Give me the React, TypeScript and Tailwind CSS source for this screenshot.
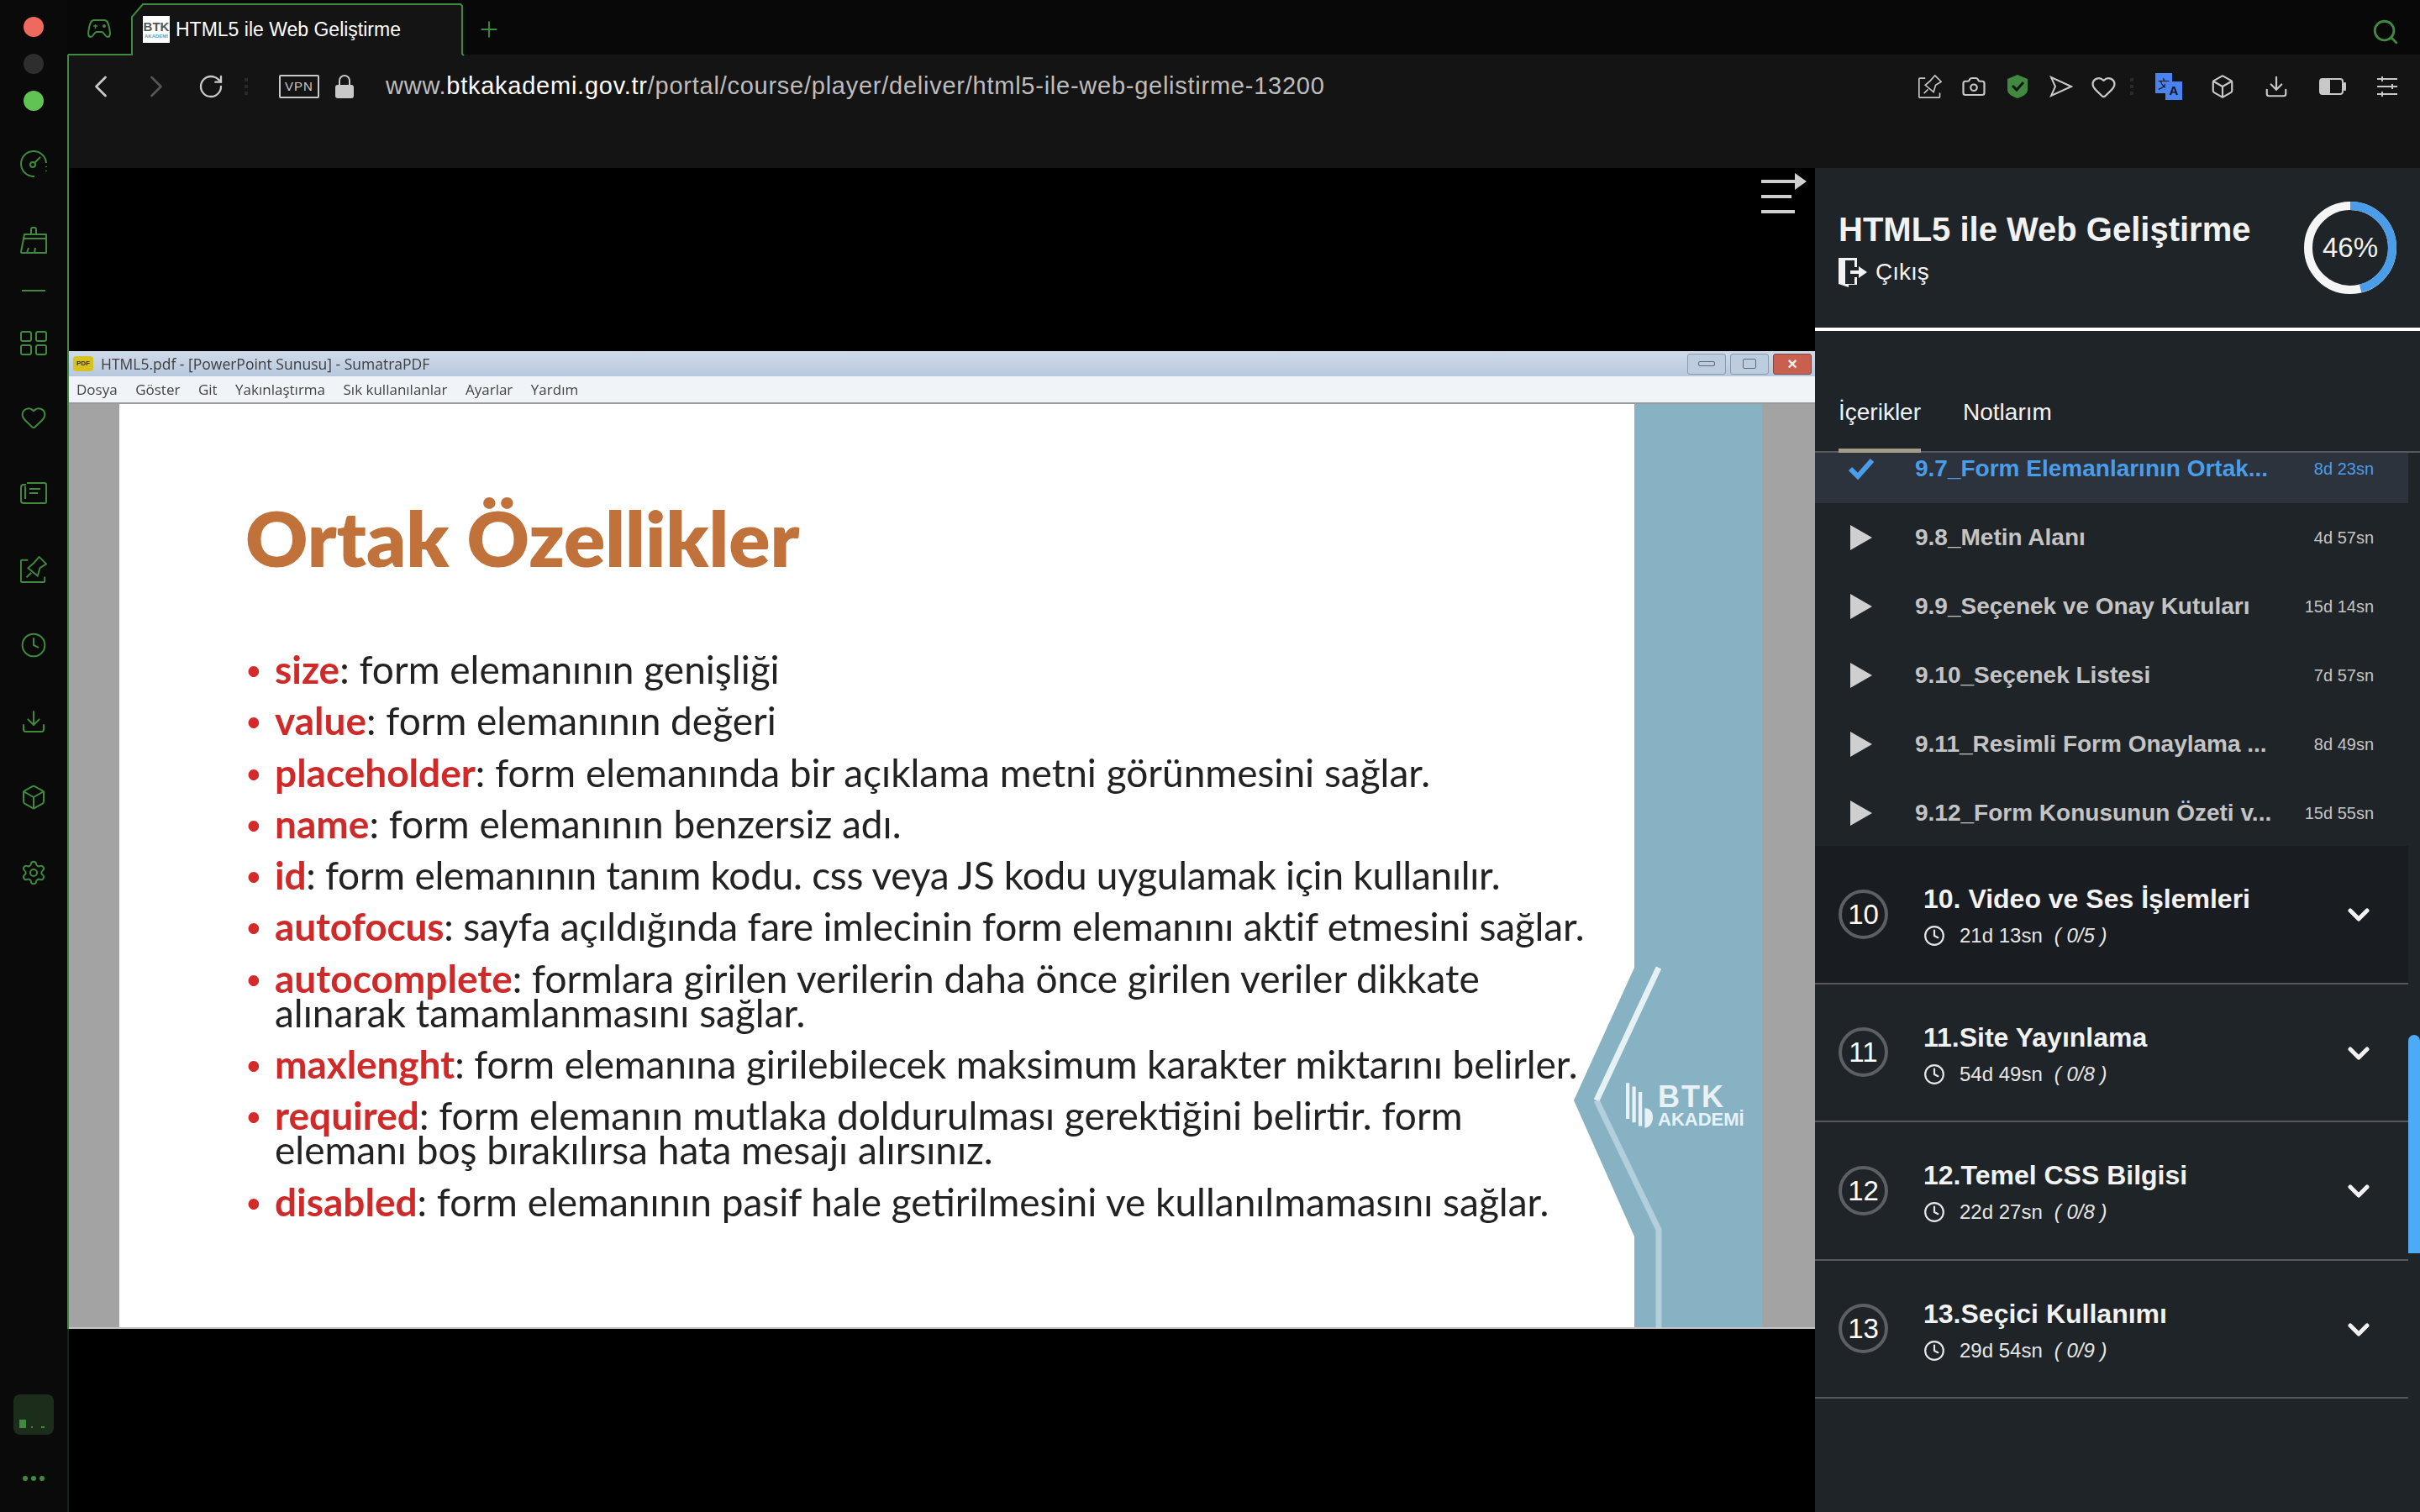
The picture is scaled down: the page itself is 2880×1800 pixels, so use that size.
import {
  Box,
  Camera,
  ChevronDown,
  ChevronLeft,
  ChevronRight,
  Clock,
  Download,
  Heart,
  Plus,
  RotateCw,
  Search,
  Settings,
} from 'lucide-react';

const green = '#3f8a3f';

function PinIcon({ color, size = 32 }: { color: string; size?: number }) {
  return (
    <svg width={size} height={size} viewBox="0 0 34 34" fill="none" stroke={color} strokeWidth="2">
      <path d="M10 5H2a1 1 0 00-1 1v26a1 1 0 001 1h28a1 1 0 001-1v-6" />
      <path d="M24 1l9 9-8 5-3 10-12-10 7-6z" />
      <path d="M8 27l6-6" />
    </svg>
  );
}

function GaugeIcon() {
  return (
    <svg width="32" height="32" viewBox="0 0 32 32" fill="none" stroke={green} strokeWidth="2">
      <path d="M17 31A15 15 0 1131 15" />
      <path d="M31 19v1M31 24v1" />
      <circle cx="15" cy="17" r="3" />
      <path d="M17 15l7-7" />
    </svg>
  );
}

function BroomIcon() {
  return (
    <svg width="32" height="32" viewBox="0 0 32 32" fill="none" stroke={green} strokeWidth="2">
      <path d="M13 9V3a2 2 0 012-2h2a2 2 0 012 2v6" />
      <path d="M5 9h26v22H2a1 1 0 01-1-1z" strokeLinejoin="round" />
      <path d="M4 14h27M8 31l2-6M17 31l1-6" />
    </svg>
  );
}

function CardsIcon() {
  return (
    <svg width="32" height="32" viewBox="0 0 32 32" fill="none" stroke={green} strokeWidth="2">
      <path d="M8 4h21a2 2 0 012 2v20a2 2 0 01-2 2H4a3 3 0 01-3-3V9a3 3 0 013-3h3" />
      <path d="M6 8v15M11 11h13M11 16h10" />
    </svg>
  );
}

function GridIcon() {
  return (
    <svg width="32" height="32" viewBox="0 0 32 32" fill="none" stroke={green} strokeWidth="2">
      <rect x="1" y="3" width="12" height="11" rx="2" />
      <rect x="19" y="3" width="12" height="11" rx="2" />
      <rect x="1" y="19" width="12" height="11" rx="2" />
      <rect x="19" y="19" width="12" height="11" rx="2" />
    </svg>
  );
}

function RailIcons() {
  const props = { size: 32, color: green, strokeWidth: 1.5 };
  return (
    <>
      <div className="mt-[47px] flex flex-col items-center gap-[59px]">
        <GaugeIcon />
        <BroomIcon />
      </div>
      <div className="mt-[43px] h-[2px] w-[28px] bg-[#3f8a3f]" />
      <div className="mt-[45px]">
        <GridIcon />
      </div>
      <div className="mt-[57px] flex flex-col items-center gap-[58.400px]">
        <Heart {...props} />
        <CardsIcon />
        <PinIcon color={green} />
        <Clock {...props} />
        <Download {...props} />
        <Box {...props} />
        <Settings {...props} />
      </div>
    </>
  );
}

function Rail() {
  return (
    <div className="flex h-full w-[80px] shrink-0 flex-col items-center bg-[#0a0a0a]">
      <div className="mt-[20px] flex flex-col gap-[20px]">
        <div className="h-[24px] w-[24px] rounded-full bg-[#ee6a5f]" />
        <div className="h-[24px] w-[24px] rounded-full bg-[#2e2e2e]" />
        <div className="h-[24px] w-[24px] rounded-full bg-[#5fc454]" />
      </div>
      <RailIcons />
      <div className="mt-auto flex h-[48px] w-[48px] items-end gap-[4px] rounded-[8px] bg-[#1c2e1b] px-[7px] pb-[8px]">
        <div className="h-[10px] w-[8px] bg-[#3f8a3f]" />
        <div className="ml-[2px] h-[2px] w-[2px] bg-[#3f8a3f]" />
        <div className="ml-[6px] h-[2px] w-[4px] bg-[#3f8a3f]" />
      </div>
      <div className="mb-[37px] mt-[49px] flex gap-[4px]">
        <div className="h-[6px] w-[6px] rounded-full bg-[#3f8a3f]" />
        <div className="h-[6px] w-[6px] rounded-full bg-[#3f8a3f]" />
        <div className="h-[6px] w-[6px] rounded-full bg-[#3f8a3f]" />
      </div>
    </div>
  );
}

function TopStrip() {
  return (
    <div className="relative flex h-[65px] shrink-0 items-center bg-[#080808]">
      <svg
        className="absolute left-0 top-0"
        width="2800"
        height="67"
        viewBox="0 0 2800 67"
        fill="#141414"
      >
        <defs>
          <linearGradient id="fade" x1="0" x2="1" y1="0" y2="0">
            <stop offset="0" stopColor={green} />
            <stop offset="0.35" stopColor={green} />
            <stop offset="0.8" stopColor="#141414" />
          </linearGradient>
        </defs>
        <path d="M77 66V20L90 5H468l2 2V64l2 2" stroke={green} strokeWidth="2" />
        <path d="M1 65H77" stroke={green} strokeWidth="2" />
        <path d="M471 65H2800" stroke="url(#fade)" strokeWidth="2" />
      </svg>
      <svg className="absolute left-[24px] top-[21px]" width="28" height="26" viewBox="0 0 28 26" fill="none" stroke={green} strokeWidth="2">
        <path d="M8 3h12c4 0 5 4 6 9s2 11-2 11c-3 0-4-6-7-6h-6c-3 0-4 6-7 6-4 0-3-6-2-11s2-9 6-9z" />
        <path d="M7 10h5M9.500 8v5" strokeWidth="1.500" />
        <circle cx="20" cy="10" r="1" />
      </svg>
      <div className="absolute left-[90px] top-[18px] flex items-center gap-[7px]">
        <div className="flex h-[32px] w-[32px] flex-col items-center justify-center bg-white font-['Liberation_Sans',sans-serif] leading-none">
          <span className="text-[15px] font-bold leading-[15px] text-[#555]">BTK</span>
          <span className="text-[6px] font-bold leading-[8px] text-[#5ba6bd]">AKADEMİ</span>
        </div>
        <span className="whitespace-nowrap font-['Liberation_Sans',sans-serif] text-[23px] text-white">
          HTML5 ile Web Geliştirme
        </span>
      </div>
      <Plus className="absolute left-[487px] top-[20px]" size={30} color={green} strokeWidth={1.5} />
      <Search className="absolute right-[24px] top-[21px]" size={34} color={green} strokeWidth={2} />
    </div>
  );
}

function ToolIcon({ children, w }: { children: React.ReactNode; w: string }) {
  return <div className={`flex h-[40px] items-center justify-center ${w}`}>{children}</div>;
}

function Toolbar() {
  const c = '#c8c8c8';
  const sw = 1.75;
  return (
    <div className="flex h-[135px] shrink-0 border-l-2 border-[#3f8a3f] bg-[#141414]">
      <div className="flex h-[76px] w-full items-center pl-[20px] pr-[5px]">
        <ChevronLeft size={44} color={c} strokeWidth={1.5} className="-ml-[4px]" />
        <ChevronRight size={44} color="#555" strokeWidth={1.5} className="ml-[22px]" />
        <RotateCw size={32} color={c} strokeWidth={1.75} className="ml-[27px]" />
        <div className="ml-[24px] flex flex-col gap-[4px]">
          <div className="h-[4px] w-[4px] bg-[#2a2a2a]" />
          <div className="h-[4px] w-[4px] bg-[#2a2a2a]" />
          <div className="h-[4px] w-[4px] bg-[#2a2a2a]" />
        </div>
        <div className="ml-[37px] flex h-[28px] w-[48px] items-center justify-center rounded-[2px] border-2 border-[#c8c8c8] font-['Liberation_Sans',sans-serif] text-[15px] tracking-[1px] text-[#c8c8c8]">
          VPN
        </div>
        <svg className="ml-[19px]" width="22" height="28" viewBox="0 0 22 28" fill={c}>
          <path d="M5 12V7a6 6 0 0112 0v5" fill="none" stroke={c} strokeWidth="2" />
          <rect x="0" y="12" width="22" height="16" rx="3" />
        </svg>
        <span className="ml-[38px] whitespace-nowrap font-['Liberation_Sans',sans-serif] text-[29px] tracking-[0.75px] text-[#bdbdbd]">
          www.<span className="text-white">btkakademi.gov.tr</span>/portal/course/player/deliver/html5-ile-web-gelistirme-13200
        </span>
        <div className="ml-auto flex items-center">
          <ToolIcon w="w-[52px]"><PinIcon color={c} size={28} /></ToolIcon>
          <ToolIcon w="w-[52px]"><Camera size={30} color={c} strokeWidth={sw} /></ToolIcon>
          <ToolIcon w="w-[52px]">
            <svg width="26" height="30" viewBox="0 0 26 30">
              <path d="M13 1l12 5v13c0 5-6 8-12 10C7 27 1 24 1 19V6z" fill="#3f8a3f" />
              <path d="M7 14l5 5 8-9" fill="none" stroke="#141414" strokeWidth="3" />
            </svg>
          </ToolIcon>
          <ToolIcon w="w-[52px]">
            <svg width="28" height="26" viewBox="0 0 28 26" fill="none" stroke={c} strokeWidth="2">
              <path d="M2 2l24 11L2 24l5-11z" />
            </svg>
          </ToolIcon>
          <ToolIcon w="w-[48px]"><Heart size={31} color={c} strokeWidth={sw} /></ToolIcon>
          <div className="ml-[8px] mr-[6px] flex flex-col gap-[4px]">
            <div className="h-[4px] w-[4px] bg-[#2a2a2a]" />
            <div className="h-[4px] w-[4px] bg-[#2a2a2a]" />
            <div className="h-[4px] w-[4px] bg-[#2a2a2a]" />
          </div>
          <ToolIcon w="w-[72px]">
            <div className="relative h-[32px] w-[32px]">
              <div className="absolute left-0 top-0 flex h-[24px] w-[20px] items-center justify-center bg-[#4a82f0] font-['Noto_Sans_CJK_SC',sans-serif] text-[14px] text-[#141414]">
                文
              </div>
              <div className="absolute bottom-0 right-0 flex h-[22px] w-[20px] items-center justify-center bg-[#4a82f0] font-['Liberation_Sans',sans-serif] text-[15px] font-bold text-[#141414]">
                A
              </div>
            </div>
          </ToolIcon>
          <ToolIcon w="w-[56px]"><Box size={30} color={c} strokeWidth={sw} /></ToolIcon>
          <ToolIcon w="w-[72px]"><Download size={30} color={c} strokeWidth={sw} /></ToolIcon>
          <ToolIcon w="w-[62px]">
            <svg width="32" height="20" viewBox="0 0 32 20">
              <rect x="1" y="1" width="27" height="18" rx="3" fill="none" stroke={c} strokeWidth="2" />
              <rect x="1" y="1" width="12" height="18" rx="2" fill={c} />
              <rect x="29" y="5" width="3" height="10" rx="1" fill={c} />
            </svg>
          </ToolIcon>
          <ToolIcon w="w-[68px]">
            <svg width="26" height="26" viewBox="0 0 26 26" stroke={c} strokeWidth="2">
              <path d="M1 4h24M1 13h24M1 22h24M7 1v6M19 10v6M7 19v6" />
            </svg>
          </ToolIcon>
        </div>
      </div>
    </div>
  );
}

const menuItems = ['Dosya', 'Göster', 'Git', 'Yakınlaştırma', 'Sık kullanılanlar', 'Ayarlar', 'Yardım'];

function WindowButton({ children, red }: { children: React.ReactNode; red?: boolean }) {
  return (
    <div
      className={`flex h-[25px] w-[46px] items-center justify-center rounded-[3px] border ${
        red ? 'border-[#7d4a44] bg-[#c9604f]' : 'border-[#8c99a8] bg-[#bccde0]'
      }`}
    >
      {children}
    </div>
  );
}

const bullets: { key: string; text: string; more?: string; tight?: string }[] = [
  { key: 'size', text: ': form elemanının genişliği' },
  { key: 'value', text: ': form elemanının değeri' },
  { key: 'placeholder', text: ': form elemanında bir açıklama metni görünmesini sağlar.' },
  { key: 'name', text: ': form elemanının benzersiz adı.' },
  { key: 'id', text: ': form elemanının tanım kodu. css veya JS kodu uygulamak için kullanılır.', tight: 'tracking-[-0.27px]' },
  { key: 'autofocus', text: ': sayfa açıldığında fare imlecinin form elemanını aktif etmesini sağlar.', tight: 'tracking-[-0.16px]' },
  { key: 'autocomplete', text: ': formlara girilen verilerin daha önce girilen veriler dikkate', more: 'alınarak tamamlanmasını sağlar.' },
  { key: 'maxlenght', text: ': form elemanına girilebilecek maksimum karakter miktarını belirler.', tight: 'tracking-[-0.08px]' },
  { key: 'required', text: ': form elemanın mutlaka doldurulması gerektiğini belirtir. form', more: 'elemanı boş bırakılırsa hata mesajı alırsınız.' },
  { key: 'disabled', text: ': form elemanının pasif hale getirilmesini ve kullanılmamasını sağlar.' },
];

function Slide() {
  return (
    <div className="relative flex flex-1 border-b-2 border-[#c4c4c4] bg-[#a3a3a3]">
      <div className="ml-[60px] w-[1803px] bg-white pl-[150px] pt-[101px] font-['Lato',sans-serif] blur-[0.5px]">
        <h1 className="text-[91.500px] font-extrabold leading-[116px] text-[#c1713a]">Ortak Özellikler</h1>
        <ul className="mt-[78px] flex flex-col gap-[20.300px]">
          {bullets.map((b) => (
            <li key={b.key} className={`flex text-[46px] leading-[41px] text-[#222] ${b.tight ?? ''}`}>
              <span className="w-[35px] shrink-0 text-[34px] text-[#d42a2a]">•</span>
              <span className="whitespace-nowrap">
                <span className="font-bold text-[#cf2a2a]">{b.key}</span>
                {b.text}
                {b.more && <br />}
                {b.more}
              </span>
            </li>
          ))}
        </ul>
      </div>
      <div className="w-[152px] bg-[#87b2c4]" />
      {/* teal side band of the slide, with the notch cut into the white page */}
      <svg className="absolute left-[1770px] top-0" width="230" height="1100" viewBox="0 0 230 1100" fill="none">
        <defs>
          <linearGradient id="stripe" x1="0" x2="0" y1="0" y2="1">
            <stop offset="0" stopColor="#8db6c7" />
            <stop offset="0.5" stopColor="#a9cbd9" />
            <stop offset="1" stopColor="#f0f7fa" />
          </linearGradient>
        </defs>
        <path d="M93 671L21 829L93 991z" fill="#87b2c4" />
        <path d="M122 30V671" stroke="url(#stripe)" strokeWidth="7" />
        <path d="M122 671L48 829" stroke="#e6f1f5" strokeWidth="7" />
        <path d="M48 829L122 983V1100" stroke="#c4dbe5" strokeWidth="7" opacity="0.7" />
      </svg>
      <div className="absolute left-[1853px] top-[806px] flex items-center gap-[6px] font-['Liberation_Sans',sans-serif] text-[#e8f2f6]">
        <svg width="32" height="58" viewBox="0 0 30 54" fill="#e8f2f6">
          <path d="M0 2h4v40H0zM7 6h4v40H7zM14 12h4v38h-4zM21 30c6 0 9 4 9 10s-3 12-9 12z" />
        </svg>
        <div className="flex flex-col leading-none">
          <span className="text-[36px] font-bold leading-[33px] tracking-[2px]">BTK</span>
          <span className="text-[22px] font-bold leading-[21px]">AKADEMİ</span>
        </div>
      </div>
    </div>
  );
}

function SlideWindow() {
  return (
    <div className="flex h-[1164px] shrink-0 flex-col border-l-2 border-[#3f8a3f]">
      <div className="flex h-[30px] shrink-0 items-center bg-gradient-to-b from-[#cfdbe9] to-[#b7c8de] pl-[5px] pr-[4px]">
        <div className="flex h-[18px] w-[24px] items-center justify-center rounded-[4px] bg-[#d8c21e] font-['Liberation_Sans',sans-serif] text-[8px] font-bold text-[#333]">
          PDF
        </div>
        <span className="ml-[9px] font-['Open_Sans',sans-serif] text-[17.500px] text-[#3d3d3d] blur-[0.3px]">
          HTML5.pdf - [PowerPoint Sunusu] - SumatraPDF
        </span>
        <div className="ml-auto flex gap-[5px]">
          <WindowButton><div className="h-[6px] w-[20px] rounded-[2px] border border-[#667]" /></WindowButton>
          <WindowButton><div className="h-[12px] w-[16px] rounded-[2px] border border-[#667]" /></WindowButton>
          <WindowButton red><span className="font-['Liberation_Sans',sans-serif] text-[20px] font-bold leading-none text-[#eee]">×</span></WindowButton>
        </div>
      </div>
      <div className="flex h-[33px] shrink-0 items-center gap-[21.500px] border-b-2 border-[#9a9a9a] bg-[#f0f3f8] pl-[9px] font-['Open_Sans',sans-serif] text-[17px] text-[#444] blur-[0.3px]">
        {menuItems.map((m) => (
          <span key={m}>{m}</span>
        ))}
      </div>
      <Slide />
    </div>
  );
}

function VideoArea() {
  return (
    <div className="flex min-w-0 flex-1 flex-col bg-black">
      <div className="h-[218px] shrink-0 border-l-2 border-[#3f8a3f]">
        <svg className="ml-[2014px] mt-[6px]" width="54" height="48" viewBox="0 0 54 48" fill="#cfcfcf">
          <path d="M0 8h40V0l14 10-14 10v-8H0zM0 26h36v4H0zM0 44h40v4H0z" />
        </svg>
      </div>
      <SlideWindow />
      <div className="flex-1 border-l-2 border-[#12241a]" />
    </div>
  );
}

const lessons = [
  { title: '9.7_Form Elemanlarının Ortak...', time: '8d 23sn', done: true },
  { title: '9.8_Metin Alanı', time: '4d 57sn' },
  { title: '9.9_Seçenek ve Onay Kutuları', time: '15d 14sn' },
  { title: '9.10_Seçenek Listesi', time: '7d 57sn' },
  { title: '9.11_Resimli Form Onaylama ...', time: '8d 49sn' },
  { title: '9.12_Form Konusunun Özeti v...', time: '15d 55sn' },
];

const chapters = [
  { n: 10, title: '10. Video ve Ses İşlemleri', time: '21d 13sn', count: '( 0/5 )', dark: true },
  { n: 11, title: '11.Site Yayınlama', time: '54d 49sn', count: '( 0/8 )' },
  { n: 12, title: '12.Temel CSS Bilgisi', time: '22d 27sn', count: '( 0/8 )' },
  { n: 13, title: '13.Seçici Kullanımı', time: '29d 54sn', count: '( 0/9 )' },
];

function LessonRow({ title, time, done }: { title: string; time: string; done?: boolean }) {
  return (
    <div className={`flex h-[82px] items-center pl-[40px] pr-[41px] ${done ? 'bg-[#2c333c]' : ''}`}>
      <div className="flex w-[79px] shrink-0">
        {done ? (
          <svg width="30" height="26" viewBox="0 0 30 26" fill="none" stroke="#4a9de8" strokeWidth="6">
            <path d="M2 13l9 9L28 3" />
          </svg>
        ) : (
          <svg width="30" height="30" viewBox="0 0 30 30" fill="#cfcfcf">
            <path d="M2 0l26 15L2 30z" />
          </svg>
        )}
      </div>
      <span className={`whitespace-nowrap text-[28px] font-bold ${done ? 'text-[#4a9de8]' : 'text-[#c4c4c4]'}`}>
        {title}
      </span>
      <span className={`ml-auto whitespace-nowrap text-[20px] ${done ? 'text-[#4a9de8]' : 'text-[#c4c4c4]'}`}>
        {time}
      </span>
    </div>
  );
}

function ChapterRow({ n, title, time, count, dark }: (typeof chapters)[number]) {
  return (
    <div className={`flex h-[164.500px] items-center border-b-2 border-[#55595e] pl-[28px] pr-[39px] ${dark ? 'bg-[#191c21]' : ''}`}>
      <div className="flex h-[59px] w-[59px] shrink-0 items-center justify-center rounded-full border-4 border-[#5c6064] text-[33px] text-white">
        {n}
      </div>
      <div className="ml-[42px] flex flex-col pt-[3px]">
        <span className="text-[32px] font-bold leading-[40px] text-[#f2f2f2]">{title}</span>
        <span className="mt-[9px] flex items-center text-[24px] leading-[30px] text-[#e6e6e6]">
          <Clock size={26} strokeWidth={2} className="mr-[17px]" />
          {time}
          <span className="ml-[14px] italic">{count}</span>
        </span>
      </div>
      <ChevronDown size={40} color="#f2f2f2" strokeWidth={3} className="ml-auto mt-[2px]" />
    </div>
  );
}

function CoursePanel() {
  return (
    <div className="relative flex w-[720px] shrink-0 flex-col bg-[#1f2429] font-['Liberation_Sans',sans-serif]">
      <div className="flex h-[194px] shrink-0 items-center justify-between border-b-4 border-white pl-[28px] pr-[28px]">
        <div>
          <div className="text-[40px] font-bold leading-[48px] text-[#f2f2f2]">HTML5 ile Web Geliştirme</div>
          <div className="mt-[9px] flex items-center gap-[10px] text-[28px] leading-[36px] text-[#f2f2f2]">
            <svg width="34" height="36" viewBox="0 0 34 36" fill="#f2f2f2">
              <path d="M0 1h22v11h-3V4H8v28h11v-8h3v9H12v3L0 32z" />
              <path d="M14 16h10v-5l10 7-10 7v-5H14z" />
            </svg>
            Çıkış
          </div>
        </div>
        <div className="relative flex h-[110px] w-[110px] items-center justify-center text-[33px] text-[#f2f2f2]">
          <svg className="absolute inset-0" width="110" height="110" viewBox="0 0 110 110" fill="none" strokeWidth="10">
            <circle cx="55" cy="55" r="50" stroke="#f5f5f5" />
            <circle
              cx="55"
              cy="55"
              r="50"
              stroke="#4a9de8"
              strokeDasharray="144.500 314.200"
              transform="rotate(-90 55 55)"
            />
          </svg>
          46%
        </div>
      </div>
      <div className="relative flex h-[145px] shrink-0 items-center gap-[50px] border-b-2 border-[#55595e] pl-[28px] pt-[50px] text-[28px] text-[#f2f2f2]">
        <span>İçerikler</span>
        <span>Notlarım</span>
        <div className="absolute bottom-[-2px] left-[28px] h-[5px] w-[98px] bg-[#a49d8a]" />
      </div>
      <div className="min-h-0 flex-1 overflow-hidden">
        <div className="-mt-[22px] w-[706px]">
          {lessons.map((l) => (
            <LessonRow key={l.title} {...l} />
          ))}
          <div className="-mt-[2px]">
            {chapters.map((c) => (
              <ChapterRow key={c.n} {...c} />
            ))}
          </div>
        </div>
      </div>
      <div className="absolute right-0 top-[1032px] h-[260px] w-[14px] rounded-t-full bg-[#4dabf5]" />
    </div>
  );
}

export default function App() {
  return (
    <div className="flex h-[1800px] w-[2880px] overflow-hidden bg-black">
      <Rail />
      <div className="flex min-w-0 flex-1 flex-col">
        <TopStrip />
        <Toolbar />
        <div className="flex min-h-0 flex-1">
          <VideoArea />
          <CoursePanel />
        </div>
      </div>
    </div>
  );
}
